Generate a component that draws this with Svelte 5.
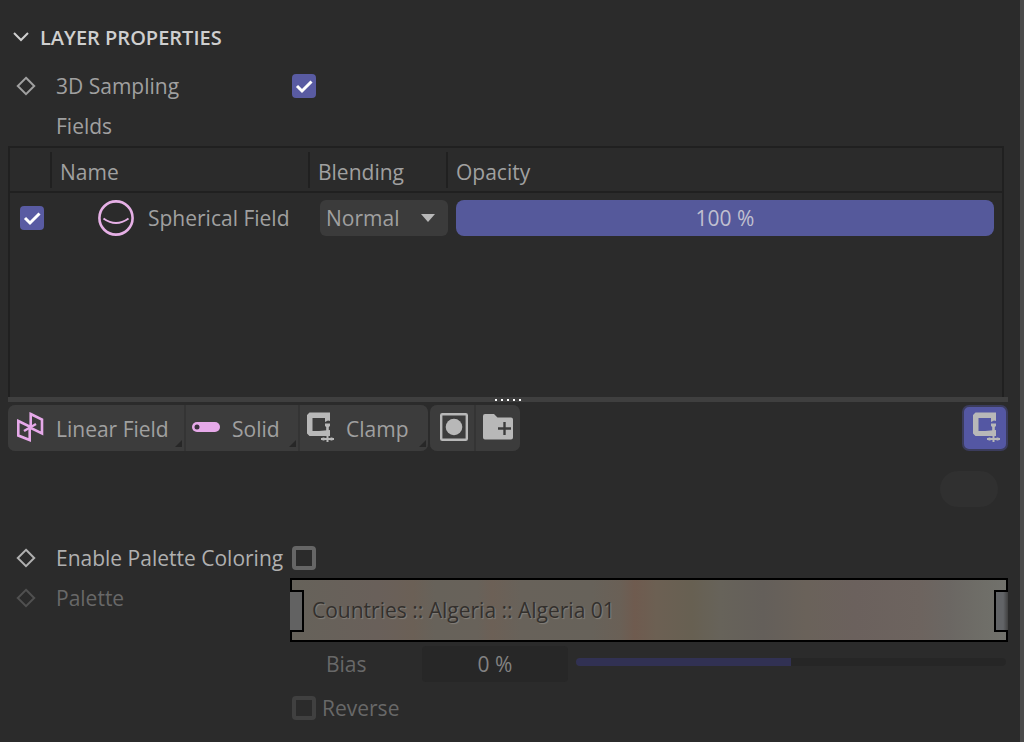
<script lang="ts">
	let open = $state(true);
	let sampling = $state(true);
	let fieldOn = $state(true);
	let blending = $state('Normal');
	let opacity = $state('100 %');
	let coloring = $state(false);
	let bias = $state(0);
	let reverse = $state(false);

	let biasFill = $derived((bias + 100) / 2);
</script>

{#snippet diamond()}
	<svg class="diamond" width="20" height="20" viewBox="0 0 20 20" aria-hidden="true">
		<path d="M10 1.8 18.2 10 10 18.2 1.8 10Z" fill="none" stroke="currentColor" stroke-width="2" />
	</svg>
{/snippet}

{#snippet tick()}
	<svg class="tick" width="24" height="24" viewBox="0 0 24 24" aria-hidden="true">
		<path d="M5 12 10 17 19.5 7.5" fill="none" stroke="#fff" stroke-width="3" />
	</svg>
{/snippet}

{#snippet clampIcon()}
	<svg width="28" height="32" viewBox="0 0 28 32" aria-hidden="true">
		<path d="M2.5 1.5H23V10L21 9.5 18 11V7H5.5V20H12L23 19V25H2.5L0 22.5V4Z" fill="currentColor" />
		<path d="M18 12.5H23V15L21.8 16V20H19.2V16L18 15Z" fill="currentColor" />
		<path d="M14 28H27M20.5 24V31M16.5 26.5V29.5M24.5 26.5V29.5" fill="none" stroke="currentColor" stroke-width="2" />
	</svg>
{/snippet}

<main>
	<button class="title" aria-expanded={open} onclick={() => (open = !open)}>
		<svg width="16" height="12" viewBox="0 0 16 12" aria-hidden="true">
			<path d="M1 1 8 8 15 1" fill="none" stroke="currentColor" stroke-width="2" />
		</svg>
		<span>LAYER PROPERTIES</span>
	</button>

	{#if open}
		<div class="row">
			{@render diamond()}
			<label for="sampling">3D Sampling</label>
			<span class="check">
				<input id="sampling" type="checkbox" bind:checked={sampling} />
				{@render tick()}
			</span>
		</div>
		<div class="row">
			<span></span>
			<span>Fields</span>
		</div>

		<div class="fields">
			<table>
				<thead>
					<tr>
						<th class="col-on" aria-label="Enabled"></th>
						<th class="col-name"><div>Name</div></th>
						<th class="col-blend"><div>Blending</div></th>
						<th><div>Opacity</div></th>
					</tr>
				</thead>
				<tbody>
					<tr>
						<td>
							<span class="check">
								<input type="checkbox" aria-label="Enable field" bind:checked={fieldOn} />
								{@render tick()}
							</span>
						</td>
						<td>
							<div class="field-name">
								<svg width="36" height="36" viewBox="0 0 36 36" aria-hidden="true">
									<circle cx="18" cy="18" r="16.6" fill="none" stroke="#e6b0e6" stroke-width="2.6" />
									<path d="M5.5 18.5Q18 27.5 30.5 18.5" fill="none" stroke="#e6b0e6" stroke-width="2" />
								</svg>
								<span>Spherical Field</span>
							</div>
						</td>
						<td>
							<span class="select">
								<select aria-label="Blending" bind:value={blending}>
									<option>Normal</option>
									<option>Add</option>
									<option>Multiply</option>
								</select>
								<svg width="14" height="8" viewBox="0 0 14 8" aria-hidden="true">
									<path d="M0 0H14L7 8Z" fill="#b8b8b8" />
								</svg>
							</span>
						</td>
						<td>
							<input class="opacity" type="text" aria-label="Opacity" bind:value={opacity} />
						</td>
					</tr>
				</tbody>
			</table>
		</div>

		<div class="splitter">
			<i></i><i></i><i></i><i></i><i></i>
		</div>

		<div class="toolbar">
			<div class="group">
				<button class="menu linear">
					<svg width="28" height="32" viewBox="0 0 28 32" aria-hidden="true">
						<path d="M2.3 10 13.7 15.5V29L2.3 24.5ZM14.7 3 26 8.5V22.5L14.7 17Z" fill="none" stroke="#e6a9e9" stroke-width="2.6" />
						<path d="M8 20 20 13" stroke="#e6a9e9" stroke-width="2.4" />
					</svg>
					<span>Linear Field</span>
				</button>
				<button class="menu solid">
					<svg width="28" height="12" viewBox="0 0 28 12" aria-hidden="true">
						<rect y="1" width="28" height="10" rx="5" fill="#e6a9e9" />
						<circle cx="5" cy="6" r="2.5" fill="#3a2f3d" />
					</svg>
					<span>Solid</span>
				</button>
				<button class="menu clamp">
					{@render clampIcon()}
					<span>Clamp</span>
				</button>
			</div>
			<div class="group">
				<button class="tool" aria-label="Add mask">
					<svg width="28" height="28" viewBox="0 0 28 28" aria-hidden="true">
						<rect x="1.2" y="1.2" width="25.6" height="25.6" rx="1" fill="none" stroke="currentColor" stroke-width="2.4" />
						<circle cx="14" cy="14" r="8.3" fill="currentColor" />
					</svg>
				</button>
				<button class="tool" aria-label="Add folder">
					<svg width="30" height="26" viewBox="0 0 30 26" aria-hidden="true">
						<path d="M2 0H11L14.5 3.5H28Q30 3.5 30 5.5V23.5Q30 25.5 28 25.5H2Q0 25.5 0 23.5V2Q0 0 2 0Z" fill="currentColor" />
						<path d="M15 14.5H28M21.5 8V21" stroke="#3c3c3c" stroke-width="2.4" />
					</svg>
				</button>
			</div>
			<button class="remap" aria-label="Show remapping" aria-pressed="true">
				{@render clampIcon()}
			</button>
		</div>

		<div class="pill-line"><span class="pill"></span></div>

		<div class="row bright">
			{@render diamond()}
			<label for="coloring">Enable Palette Coloring</label>
			<span class="check">
				<input id="coloring" type="checkbox" bind:checked={coloring} />
				{@render tick()}
			</span>
		</div>

		<div class="row dim palette-row">
			{@render diamond()}
			<span>Palette</span>
			<div class="palette">
				<span>Countries :: Algeria :: Algeria 01</span>
				<div class="handle left"></div>
				<div class="handle right"></div>
			</div>
		</div>

		<div class="sub bias">
			<label for="bias">Bias</label>
			<input id="bias" type="text" value="{bias} %" disabled />
			<input
				type="range"
				min="-100"
				max="100"
				aria-label="Bias amount"
				bind:value={bias}
				style="--fill: {biasFill}%"
				disabled
			/>
		</div>
		<div class="sub reverse">
			<span class="check">
				<input id="reverse" type="checkbox" bind:checked={reverse} disabled />
				{@render tick()}
			</span>
			<label for="reverse">Reverse</label>
		</div>
	{/if}
</main>

<style>
	:global(body) {
		margin: 0;
		background: #2b2b2b;
	}

	main {
		box-sizing: border-box;
		min-height: 100vh;
		padding: 18px 12px 0 8px;
		border-right: 4px solid #4a4a4a;
		background: #2b2b2b;
		color: #a0a0a0;
		font-family: "Open Sans", "Noto Sans", sans-serif;
		font-size: 21px;
		line-height: 28px;
	}

	button,
	input,
	select {
		margin: 0;
		padding: 0;
		border: none;
		background: none;
		color: inherit;
		font: inherit;
	}

	svg {
		display: block;
		flex-shrink: 0;
	}

	.title {
		display: flex;
		align-items: center;
		gap: 11px;
		height: 40px;
		margin-bottom: 8px;
		padding-left: 5px;
		color: #cfcfcf;
		font-size: 20px;
		font-weight: 600;
	}

	.row {
		display: grid;
		grid-template-columns: 40px 234px 1fr;
		align-items: center;
		height: 40px;
		padding-left: 8px;
		white-space: nowrap;
	}

	.row .check {
		margin-left: 2px;
	}

	.bright {
		color: #b0b0b0;
	}

	.dim {
		color: #686868;
	}

	.dim .diamond {
		color: #505050;
	}

	.check {
		display: grid;
		width: 24px;
		height: 24px;
	}

	.check > :global(*) {
		grid-area: 1 / 1;
	}

	.check input {
		appearance: none;
		box-sizing: border-box;
		width: 24px;
		height: 24px;
		border: 4px solid #666;
		border-radius: 4px;
	}

	.check input:checked {
		border: none;
		background: #595ba2;
	}

	.check input:disabled {
		border-color: #404040;
	}

	.tick {
		display: none;
		pointer-events: none;
	}

	.check input:checked + .tick {
		display: block;
	}

	.fields {
		box-sizing: border-box;
		height: 251px;
		margin-right: 4px;
		border: 2px solid #202020;
		border-bottom: none;
	}

	table {
		width: 100%;
		table-layout: fixed;
		border-collapse: separate;
		border-spacing: 0;
	}

	th {
		height: 43px;
		padding: 0;
		border-bottom: 2px solid #202020;
		font-weight: 400;
		text-align: left;
	}

	th div {
		padding: 6px 8px 2px;
		border-left: 2px solid #202020;
	}

	.col-on {
		width: 40px;
	}

	.col-name {
		width: 258px;
	}

	.col-blend {
		width: 138px;
	}

	td {
		height: 50px;
		padding: 0;
	}

	td:first-child {
		padding-left: 10px;
	}

	td:last-child {
		padding: 0 8px 0 10px;
	}

	.field-name {
		display: flex;
		align-items: center;
		gap: 14px;
		padding-left: 48px;
	}

	.select {
		display: grid;
		align-items: center;
		width: 128px;
		margin-left: 12px;
	}

	.select select {
		grid-area: 1 / 1;
		appearance: none;
		height: 36px;
		padding-left: 6px;
		border-radius: 6px;
		background: #3b3b3b;
	}

	.select svg {
		grid-area: 1 / 1;
		justify-self: end;
		margin-right: 13px;
		pointer-events: none;
	}

	.opacity {
		display: block;
		box-sizing: border-box;
		width: 100%;
		height: 36px;
		border-radius: 8px;
		background: #55599b;
		color: #c0c0d0;
		text-align: center;
	}

	.splitter {
		display: flex;
		align-items: center;
		justify-content: center;
		gap: 4px;
		height: 5px;
		background: #3f3f3f;
	}

	.splitter i {
		width: 2px;
		height: 2px;
		background: #fff;
	}

	.toolbar {
		display: flex;
		gap: 2px;
		margin-top: 3px;
	}

	.group {
		display: flex;
		gap: 2px;
		border-radius: 7px;
		overflow: hidden;
		background: #343434;
	}

	.group button {
		display: flex;
		align-items: center;
		box-sizing: border-box;
		height: 46px;
		background: #3c3c3c;
	}

	.group svg,
	.remap svg {
		margin-bottom: 2px;
	}

	.menu {
		position: relative;
	}

	.menu span {
		padding-top: 2px;
	}

	.menu::after {
		content: "";
		position: absolute;
		right: 2px;
		bottom: 4px;
		width: 7px;
		height: 7px;
		background: #272727;
		clip-path: polygon(100% 0, 100% 100%, 0 100%);
	}

	.linear {
		gap: 12px;
		width: 176px;
		padding-left: 8px;
	}

	.solid {
		gap: 12px;
		width: 112px;
		padding-left: 6px;
	}

	.clamp {
		gap: 11px;
		width: 128px;
		padding-left: 7px;
	}

	.clamp svg,
	.remap svg,
	.tool svg {
		color: #b8b8b8;
	}

	.tool {
		justify-content: center;
		width: 44px;
	}

	.tool:first-child {
		padding-left: 3px;
	}

	.remap {
		display: flex;
		align-items: center;
		justify-content: center;
		box-sizing: border-box;
		width: 46px;
		height: 46px;
		margin-left: auto;
		padding-left: 3px;
		border: 2px solid #3b3c5c;
		border-radius: 7px;
		background: #5457a3;
	}

	.pill-line {
		display: flex;
		justify-content: flex-end;
		padding: 20px 10px 31px;
	}

	.pill {
		width: 58px;
		height: 36px;
		border-radius: 18px;
		background: #303030;
	}

	.palette-row {
		align-items: start;
		height: 64px;
	}

	.palette-row > :global(svg) {
		margin-top: 10px;
	}

	.palette-row > span {
		margin-top: 6px;
	}

	.palette {
		position: relative;
		box-sizing: border-box;
		height: 64px;
		padding: 16px 20px;
		border: 2px solid #000;
		background: linear-gradient(
			90deg,
			#66625a 0%,
			#69605a 12%,
			#6b6056 17%,
			#67625a 20%,
			#68625a 26%,
			#6c6056 28%,
			#68625a 32%,
			#67625a 42%,
			#6a6056 46%,
			#6f5b4f 48%,
			#6c6053 51%,
			#676052 56%,
			#67635a 60%,
			#645f5a 66%,
			#6a625a 72%,
			#6b615d 79%,
			#6d645f 88%,
			#6b6763 92%,
			#6f6e68 97%,
			#71716c 100%
		);
		color: #33302d;
		text-shadow: 1px 1px 1px #85807a;
	}

	.handle {
		position: absolute;
		top: 10px;
		box-sizing: border-box;
		width: 14px;
		height: 42px;
		border: 2px solid #000;
		background: #626262;
	}

	.left {
		left: -2px;
		border-left: none;
	}

	.right {
		right: -2px;
		border-right: none;
		background: linear-gradient(90deg, #626467 60%, #404040);
	}

	.sub {
		display: flex;
		align-items: center;
		height: 44px;
		color: #686868;
	}

	.bias {
		padding-left: 318px;
	}

	.bias label {
		width: 96px;
	}

	.bias input[type="text"] {
		width: 146px;
		height: 36px;
		border-radius: 4px;
		background: #272727;
		color: #828282;
		text-align: center;
	}

	.bias input[type="range"] {
		appearance: none;
		flex: 1;
		height: 8px;
		margin: 0 2px 4px 8px;
		border-radius: 4px;
		background: linear-gradient(90deg, #313153 var(--fill), #262626 var(--fill));
	}

	.bias input[type="range"]::-webkit-slider-thumb {
		appearance: none;
		width: 1px;
		height: 8px;
	}

	.reverse {
		gap: 6px;
		padding-left: 284px;
	}
</style>
